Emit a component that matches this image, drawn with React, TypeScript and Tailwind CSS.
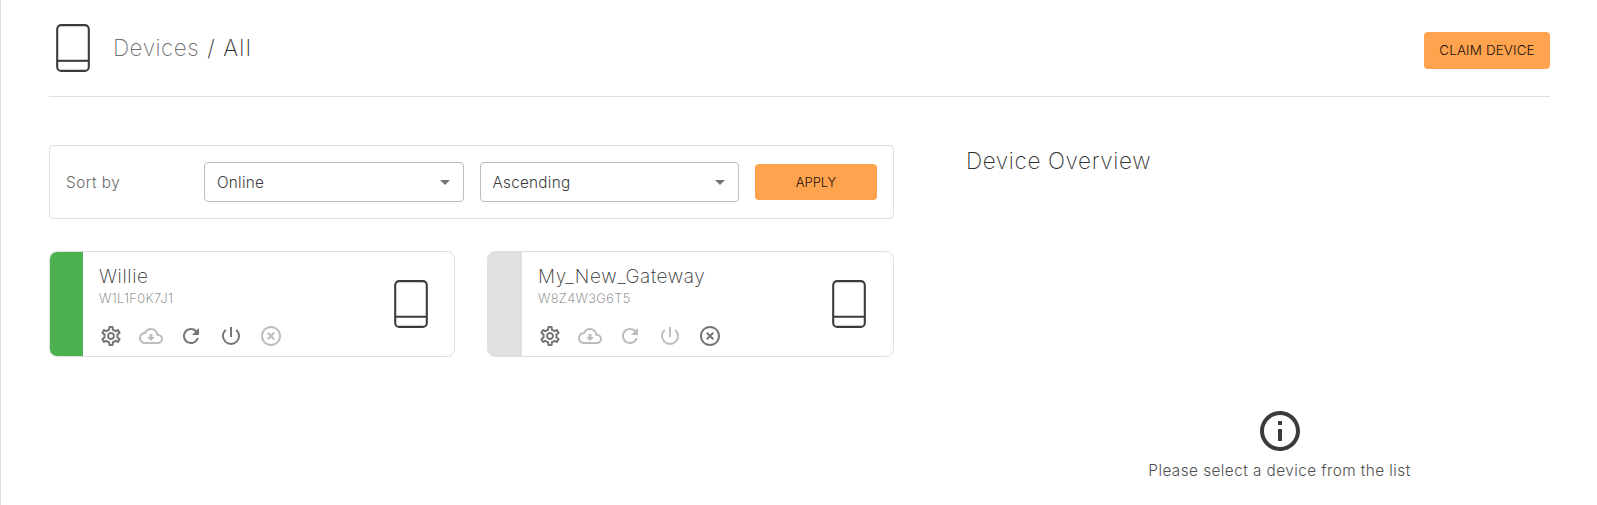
import React from "react";
import {
  MdHighlightOff,
  MdInfoOutline,
  MdOutlineCloudDownload,
  MdOutlineSettings,
  MdPowerSettingsNew,
  MdRefresh,
} from "react-icons/md";

function DeviceIcon() {
  return (
    <svg width="34" height="48" viewBox="0 0 34 48" fill="none" stroke="#3c3c3c" strokeWidth="2.1">
      <rect x="1.2" y="1.1" width="31.6" height="45.8" rx="4" />
      <path d="M1 36.8H33" />
    </svg>
  );
}

function Select({ value }: { value: string }) {
  return (
    <div className="flex h-10 min-w-0 flex-1 items-center justify-between rounded border border-[#bdbdbd] pt-0.5 pr-[13px] pl-3 text-[15.3px] tracking-[0.25px] text-[#3c3c3c]">
      <span>{value}</span>
      <svg className="mb-0.5" width="10" height="5" viewBox="0 0 10 5" fill="#757575">
        <path d="M0 0h10L5 5z" />
      </svg>
    </div>
  );
}

type Device = { name: string; serial: string; online: boolean };

function DeviceCard({ name, serial, online }: Device) {
  const on = "text-[#757575]";
  const off = "text-[#bdbdbd]";
  return (
    <div className="flex h-[106px] overflow-hidden rounded-lg border border-[#e0e0e0]">
      <div className={online ? "w-[33px] bg-[#4caf50]" : "w-[34px] bg-[#e0e0e0]"} />
      <div className="flex flex-1 flex-col pt-3 pl-4">
        <div className="h-[25px] text-[19px] leading-[26px] tracking-[0.6px] whitespace-nowrap text-[#303030]">
          {name}
        </div>
        <div className="h-[18px] text-[13px] leading-[18px] tracking-[0.35px] text-[#707070]">{serial}</div>
        <div className="mt-[17px] flex gap-4">
          <MdOutlineSettings size={24} className={on} />
          <MdOutlineCloudDownload size={24} className={off} />
          <MdRefresh size={24} className={online ? on : off} />
          <MdPowerSettingsNew size={24} className={online ? on : off} />
          <MdHighlightOff size={24} className={online ? off : on} />
        </div>
      </div>
      <div className={online ? "flex items-center pr-[26px]" : "flex items-center pr-[27px]"}>
        <DeviceIcon />
      </div>
    </div>
  );
}

export default function App() {
  return (
    <div className="h-[505px] overflow-hidden border-l border-[#e0e0e0] bg-white pr-[47px] pl-12 font-['Inter',sans-serif] font-extralight">
      <header className="flex h-[97px] items-center justify-between border-b border-[#e0e0e0]">
        <div className="flex items-center pl-[7px]">
          <DeviceIcon />
          <div className="ml-[23px] flex gap-2 text-[22.5px] leading-8 tracking-[0.5px] text-[#303030]">
            <span className="text-[#707070]">Devices</span>
            <span>/</span>
            <span className="tracking-[1.3px]">All</span>
          </div>
        </div>
        <button className="mt-[5px] h-[37px] w-[126px] rounded bg-[#ffa34f] text-[13.5px] font-light tracking-[0.1px] text-[#1a1008]">
          CLAIM DEVICE
        </button>
      </header>
      <main className="flex pt-12">
        <section className="w-[845px]">
          <div className="flex h-[74px] items-center rounded border border-[#e0e0e0] pr-4 pl-4">
            <div className="w-[138px] shrink-0 pt-0.5 text-[15.3px] font-light tracking-[0.5px] text-[#6a6a6a]">
              Sort by
            </div>
            <div className="flex min-w-0 flex-1 items-center gap-4 font-light">
              <Select value="Online" />
              <Select value="Ascending" />
              <button className="h-9 w-[122px] shrink-0 rounded bg-[#ffa34f] pt-0.5 text-[13px] font-light text-[#1a1008]">
                APPLY
              </button>
            </div>
          </div>
          <div className="mt-8 grid grid-cols-[406px_407px] gap-8">
            <DeviceCard name="Willie" serial="W1L1F0K7J1" online />
            <DeviceCard name="My_New_Gateway" serial="W8Z4W3G6T5" online={false} />
          </div>
        </section>
        <aside className="ml-[72px] flex-1">
          <h2 className="h-8 text-[22.5px] leading-8 tracking-[0.62px] text-[#303030]">Device Overview</h2>
          <div className="mt-[230px] flex flex-col items-center pl-[43px] text-[#3c3c3c]">
            <MdInfoOutline size={48} />
            <p className="mt-1 text-[15.3px] leading-6 font-light tracking-[0.45px] text-[#505050]">
              Please select a device from the list
            </p>
          </div>
        </aside>
      </main>
    </div>
  );
}
